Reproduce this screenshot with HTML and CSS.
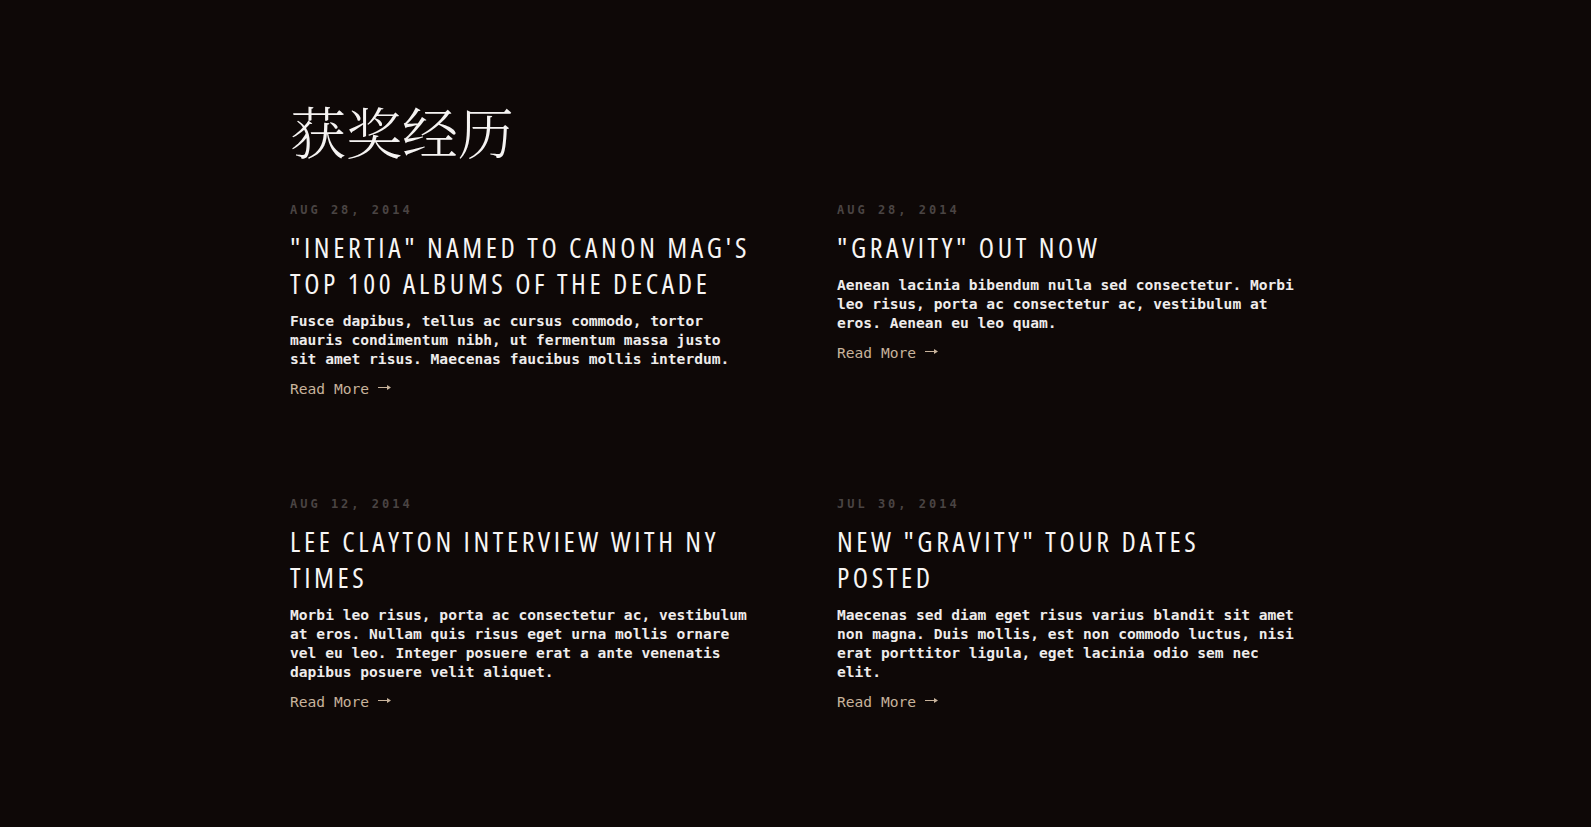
FILE: index.html
```html
<!DOCTYPE html>
<html lang="zh">
<head>
<meta charset="utf-8">
<title>获奖经历</title>
<link rel="stylesheet" href="styles.css">
</head>
<body>
<main class="awards">
  <h1 class="awards-title">获奖经历</h1>
  <div class="posts">
    <article class="post">
      <div class="post-date">AUG 28, 2014</div>
      <h2 class="post-title">"INERTIA" NAMED TO CANON MAG'S TOP 100 ALBUMS OF THE DECADE</h2>
      <p class="post-text">Fusce dapibus, tellus ac cursus commodo, tortor mauris condimentum nibh, ut fermentum massa justo sit amet risus. Maecenas faucibus mollis interdum.</p>
      <a class="read-more" href="#">Read More <svg class="arrow" width="13" height="7" viewBox="0 0 13 7"><path d="M0 3.5H10" stroke="currentColor" stroke-width="1"/><path d="M9 1L13 3.5L9 6Z" fill="currentColor"/></svg></a>
    </article>
    <article class="post">
      <div class="post-date">AUG 28, 2014</div>
      <h2 class="post-title">"GRAVITY" OUT NOW</h2>
      <p class="post-text">Aenean lacinia bibendum nulla sed consectetur. Morbi leo risus, porta ac consectetur ac, vestibulum at eros. Aenean eu leo quam.</p>
      <a class="read-more" href="#">Read More <svg class="arrow" width="13" height="7" viewBox="0 0 13 7"><path d="M0 3.5H10" stroke="currentColor" stroke-width="1"/><path d="M9 1L13 3.5L9 6Z" fill="currentColor"/></svg></a>
    </article>
    <article class="post">
      <div class="post-date">AUG 12, 2014</div>
      <h2 class="post-title">LEE CLAYTON INTERVIEW WITH NY TIMES</h2>
      <p class="post-text">Morbi leo risus, porta ac consectetur ac, vestibulum at eros. Nullam quis risus eget urna mollis ornare vel eu leo. Integer posuere erat a ante venenatis dapibus posuere velit aliquet.</p>
      <a class="read-more" href="#">Read More <svg class="arrow" width="13" height="7" viewBox="0 0 13 7"><path d="M0 3.5H10" stroke="currentColor" stroke-width="1"/><path d="M9 1L13 3.5L9 6Z" fill="currentColor"/></svg></a>
    </article>
    <article class="post">
      <div class="post-date">JUL 30, 2014</div>
      <h2 class="post-title">NEW "GRAVITY" TOUR DATES POSTED</h2>
      <p class="post-text">Maecenas sed diam eget risus varius blandit sit amet non magna. Duis mollis, est non commodo luctus, nisi erat porttitor ligula, eget lacinia odio sem nec elit.</p>
      <a class="read-more" href="#">Read More <svg class="arrow" width="13" height="7" viewBox="0 0 13 7"><path d="M0 3.5H10" stroke="currentColor" stroke-width="1"/><path d="M9 1L13 3.5L9 6Z" fill="currentColor"/></svg></a>
    </article>
  </div>
</main>
</body>
</html>
```
FILE: styles.css
```css
html, body {
  margin: 0;
  padding: 0;
  background: #0e0807;
}

body {
  color: #f2f0ef;
  font-family: "DejaVu Sans Mono", monospace;
}

.awards {
  width: 1007px;
  margin: 0 auto;
  padding: 96px 0 100px;
  transform: translateX(-2px);
}

.awards-title {
  margin: 0 0 38px;
  font-family: "Noto Serif CJK SC", "Noto Sans CJK SC", serif;
  font-weight: 300;
  font-size: 56px;
  line-height: 68px;
  color: #f5f3f2;
  letter-spacing: 0;
}

.posts {
  display: grid;
  grid-template-columns: 460px 460px;
  column-gap: 87px;
  row-gap: 98px;
  align-items: start;
}

.post-date {
  font-size: 12px;
  line-height: 16px;
  letter-spacing: 3px;
  font-weight: bold;
  color: #4a4443;
}

.post-title {
  margin: 11px 0 10px;
  font-family: "Open Sans", "DejaVu Sans Condensed", sans-serif;
  font-stretch: 75%;
  font-weight: 380;
  font-size: 28px;
  line-height: 36px;
  letter-spacing: 3.6px;
  color: #f7f5f4;
}

.post-text {
  margin: 0 0 11px;
  font-size: 14.6px;
  line-height: 19px;
  font-weight: bold;
  color: #eeeceb;
}

.read-more {
  display: inline-block;
  font-size: 14.6px;
  line-height: 19px;
  color: #c8b39c;
  text-decoration: none;
}

.arrow {
  vertical-align: 3.5px;
}
```
